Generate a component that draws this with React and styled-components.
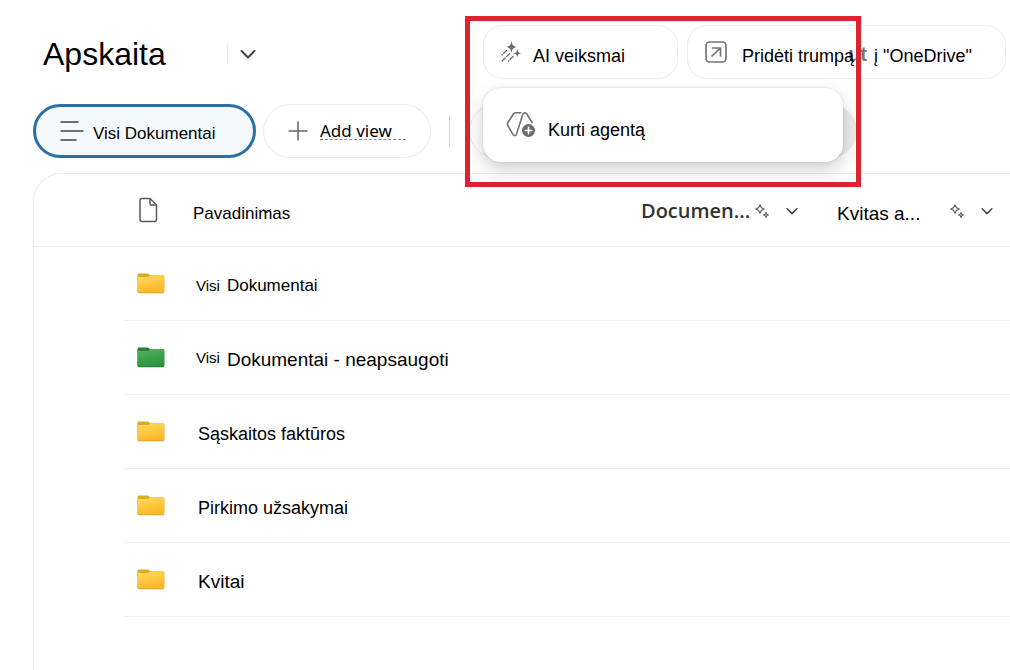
import React from 'react';
import styled, { createGlobalStyle } from 'styled-components';

const GlobalStyle = createGlobalStyle`
  * {
    box-sizing: border-box;
  }

  body {
    margin: 0;
    background: #fff;
    color: #000;
    font-family: 'Liberation Sans', Arial, sans-serif;
    overflow-x: hidden;
  }

  button {
    font-family: inherit;
    color: inherit;
    cursor: pointer;
  }
`;

const Page = styled.div`
  min-height: 100vh;
  padding: 25px 0 0 33px;
  display: flex;
  flex-direction: column;
  overflow: hidden;
`;

const TopBar = styled.header`
  display: grid;
  grid-template-columns: 450px 1fr;
  align-items: center;
`;

const TitleGroup = styled.div`
  display: flex;
  align-items: center;
  padding: 4px 0 0 10px;
`;

const Title = styled.h1`
  margin: 0;
  width: 184px;
  font-size: 32px;
  line-height: 50px;
  font-weight: 400;
`;

const Divider = styled.span`
  width: 1px;
  height: ${({ $height }) => $height}px;
  background: ${({ $color }) => $color};
`;

const IconButton = styled.button`
  display: inline-flex;
  align-items: center;
  justify-content: center;
  padding: 0;
  border: 0;
  background: none;
  color: #444;
`;

const TitleToggle = styled(IconButton)`
  width: 40px;
  height: 40px;
`;

const Actions = styled.div`
  display: flex;
  gap: 9px;
  white-space: nowrap;
`;

const Pill = styled.button`
  display: flex;
  align-items: center;
  gap: ${({ $gap }) => $gap || 12}px;
  height: 54px;
  min-width: ${({ $width }) => $width}px;
  padding: 0 17px;
  border: 1px solid #ebebeb;
  border-radius: ${({ $radius }) => $radius || 27}px;
  background: #fff;
  font-size: 18px;
  text-align: left;
  white-space: nowrap;
`;

const ViewPill = styled(Pill)`
  padding: 0 24px;
`;

const ActiveViewPill = styled(ViewPill)`
  border: 3px solid #2a70a5;
  background: #f3f9fd;
  font-size: 17px;
`;

const Label = styled.span`
  padding-top: ${({ $drop }) => $drop || 8}px;
  line-height: 22px;
`;

const AddLabel = styled.span`
  position: relative;
  font-family: 'Noto Sans', sans-serif;
  font-size: 17px;
  line-height: 22px;

  &::after {
    content: '';
    position: absolute;
    left: 0;
    right: -14px;
    bottom: 2px;
    border-bottom: 1px dashed #888;
  }
`;

const Ghost = styled.span`
  position: relative;
  display: inline-block;
  width: 15px;
  height: 22px;
  vertical-align: bottom;

  &::after {
    content: 'ut';
    position: absolute;
    right: 2px;
    top: -2px;
    color: #777;
    font-size: 20px;
    font-weight: 700;
    z-index: -1;
  }
`;

const ShortcutPill = styled(Pill)`
  position: relative;
  z-index: 0;
`;

const MenuAnchor = styled.div`
  position: relative;
  z-index: 2;
`;

const Menu = styled.div`
  position: absolute;
  top: 63px;
  left: 0;
  width: 360px;
  border-radius: 18px;
  background: #fff;
  box-shadow: 0 8px 18px rgba(0, 0, 0, 0.18), 0 0 3px rgba(0, 0, 0, 0.14);
`;

const MenuItem = styled.button`
  display: flex;
  align-items: center;
  gap: 12px;
  width: 100%;
  height: 74px;
  padding: 0 23px;
  border: 0;
  border-radius: 18px;
  background: none;
  font-size: 18px;
`;

const Highlight = styled.div`
  position: absolute;
  top: -9px;
  left: -18px;
  width: 396px;
  height: 171px;
  border: 5px solid #dc2430;
  pointer-events: none;
`;

const ViewBar = styled.nav`
  display: flex;
  align-items: center;
  gap: 7px;
  margin-top: 25px;
`;

const FilterSlot = styled.div`
  display: flex;
  align-items: center;
  gap: 19px;
  margin-left: 11px;
`;

const FilterBox = styled.div`
  width: 388px;
  height: 54px;
  border: 1px solid #e8e8e8;
  border-radius: 27px;
  background: linear-gradient(90deg, #fff, #ebebeb);
`;

const Panel = styled.main`
  flex: 1;
  margin-top: 15px;
  border: 1px solid #ececec;
  border-width: 1px 0 0 1px;
  border-top-left-radius: 28px;
`;

const FileTable = styled.table`
  width: 100%;
  table-layout: fixed;
  border-collapse: separate;
  border-spacing: 0;
`;

const Th = styled.th`
  height: 73px;
  padding: 0 0 0 ${({ $indent }) => $indent || 0}px;
  border-bottom: 1px solid #ededed;
  font-weight: 400;
  font-size: ${({ $size }) => $size || 17}px;
  text-align: left;
  white-space: nowrap;

  > svg {
    display: block;
  }
`;

const HeadCell = styled.div`
  display: flex;
  align-items: center;
  padding-top: 2px;
`;

const HeadText = styled.span`
  width: ${({ $width }) => $width}px;
  padding-top: 6px;
  line-height: 22px;
`;

const StrongHeadText = styled.span`
  width: 114px;
  font-family: 'Open Sans', sans-serif;
  font-weight: 600;
  line-height: 22px;
  color: #333;
`;

const ColumnToggle = styled(IconButton)`
  width: 24px;
  height: 24px;
  margin-left: 11px;
`;

const SortMark = styled.span`
  position: relative;
  padding-top: 5px;
  line-height: 22px;

  svg {
    position: absolute;
    left: 70px;
    top: 9px;
  }
`;

const Td = styled.td`
  height: 74px;
  padding: 0 0 0 ${({ $indent }) => $indent || 0}px;
  border-bottom: 1px solid ${({ $plain }) => ($plain ? 'transparent' : '#f0f0f0')};
`;

const FolderLink = styled.a`
  display: inline-flex;
  align-items: ${({ $raised }) => ($raised ? 'flex-start' : 'center')};
  gap: 7px;
  padding-top: 4px;
  color: #000;
  font-size: ${({ $size }) => $size}px;
  line-height: 22px;
  text-decoration: none;
  white-space: nowrap;
`;

const Prefix = styled.span`
  font-size: 15px;
  line-height: ${({ $raised }) => ($raised ? 18 : 22)}px;
`;

const ChevronDown = ({ width = 16, stroke = 2 }) => (
  <svg width={width} height={width} viewBox="0 0 16 16" fill="none" stroke="currentColor" strokeWidth={stroke} strokeLinecap="round" strokeLinejoin="round">
    <path d="M1.5 5 8 11.5 14.5 5" />
  </svg>
);

const AiIcon = () => (
  <svg width="20" height="22" viewBox="0 0 20 22" fill="#6b6b6b">
    <path d="M10.500 0c.8 4.200 1.600 5.100 5.500 6-3.900.9-4.700 1.800-5.500 6-.8-4.200-1.600-5.100-5.500-6 3.900-.9 4.700-1.800 5.500-6z" />
    <path d="M16.300 8.200c.6 2.800 1.200 3.400 3.700 4-2.500.6-3.100 1.200-3.700 4-.6-2.800-1.200-3.400-3.700-4 2.500-.6 3.100-1.200 3.700-4z" />
    <path d="M5.500 9.500 1 14M8.500 12.800 1.200 20M12 15.500 7.500 20" fill="none" stroke="#6b6b6b" strokeWidth="1.300" strokeLinecap="round" strokeDasharray="4 2" />
  </svg>
);

const ShortcutIcon = () => (
  <svg width="22" height="22" viewBox="0 0 22 22" fill="none" stroke="#757575" strokeWidth="1.700" strokeLinecap="round" strokeLinejoin="round">
    <rect x="1" y="1" width="20" height="20" rx="3.500" />
    <path d="M7.500 7h8v8M15.500 7l-8.500 8" />
  </svg>
);

const AgentIcon = () => (
  <svg width="30" height="28" viewBox="0 0 30 28" fill="none" stroke="#737373" strokeWidth="1.600" strokeLinecap="round" strokeLinejoin="round">
    <path d="M14 1.800H9.300c-.9 0-1.600.4-2 1.200L1.500 12.200c-.3.600-.3 1.200 0 1.800l5.600 9.600c.8 1.300 2.900 1.100 3.400-.4L16.700 3.600c.6-2 3.100-2.400 4.200-.6l5.100 8.500" />
    <path d="M14 1.800h.8" />
    <circle cx="22.500" cy="19.500" r="6.500" fill="#6b6b6b" stroke="none" />
    <path d="M22.500 16.200v6.600M19.200 19.500h6.600" stroke="#fff" />
  </svg>
);

const ViewIcon = () => (
  <svg width="24" height="20" viewBox="0 0 24 20" fill="none" stroke="#3c4246" strokeWidth="1.500" strokeLinecap="round">
    <path d="M1 1h17M1 10h22M1 19h15" />
  </svg>
);

const PlusIcon = () => (
  <svg width="20" height="20" viewBox="0 0 20 20" fill="none" stroke="#666" strokeWidth="1.500" strokeLinecap="round">
    <path d="M10 1v18M1 10h18" />
  </svg>
);

const FileIcon = () => (
  <svg width="20" height="26" viewBox="0 0 20 26" fill="none" stroke="#5a5a5a" strokeWidth="1.500" strokeLinejoin="round">
    <path d="M4 1.500h8l6.500 6.500v14.500c0 1.200-.8 2-2 2H4c-1.200 0-2-.8-2-2V3.500c0-1.200.8-2 2-2z" />
    <path d="M12 1.500V6.500c0 1 .6 1.500 1.500 1.500h5" />
  </svg>
);

const SparkleIcon = () => (
  <svg width="14" height="14" viewBox="0 0 14 14" fill="none" stroke="#666" strokeWidth="1.200" strokeLinejoin="round">
    <path d="M5 .8 6.400 3.600 9.300 5 6.400 6.400 5 9.300 3.600 6.400.8 5 3.600 3.600z" />
    <path d="M11 8.600 11.700 10.300 13.400 11 11.700 11.700 11 13.400 10.300 11.700 8.600 11 10.300 10.300z" />
  </svg>
);

const folderColors = {
  yellow: { tab: '#dcab22', top: '#ffdc61', bottom: '#fbb829', edge: '#d69a20' },
  green: { tab: '#2b7d38', top: '#55b45b', bottom: '#2c9440', edge: '#247a34' },
};

const FolderIcon = ({ color, id }) => {
  const { tab, top, bottom, edge } = folderColors[color];
  return (
    <svg width="28" height="21" viewBox="0 0 28 21" display="block">
      <defs>
        <linearGradient id={id} x1="0" y1="0" x2="0.3" y2="1">
          <stop offset="0" stopColor={top} />
          <stop offset="1" stopColor={bottom} />
        </linearGradient>
      </defs>
      <path d="M2 .5h8.500c.6 0 1 .2 1.400.6L14 3v4H.5V2C.5 1.100 1.100.5 2 .5z" fill={tab} />
      <path d="M.5 4h10c.6 0 1-.2 1.400-.6l.6-.6c.4-.4.8-.6 1.500-.6h11.800c.9 0 1.500.6 1.500 1.500v15.100c0 .9-.6 1.500-1.500 1.500H2c-.9 0-1.500-.6-1.500-1.500z" fill={edge} />
      <path d="M.5 4h10c.6 0 1-.2 1.400-.6l.6-.6c.4-.4.8-.6 1.500-.6h11.800c.9 0 1.500.6 1.500 1.500v14.300c0 .9-.6 1.500-1.500 1.500H2c-.9 0-1.500-.6-1.500-1.500z" fill={`url(#${id})`} />
    </svg>
  );
};

const folders = [
  { id: 'visi', prefix: 'Visi', name: 'Dokumentai', color: 'yellow', size: 17 },
  { id: 'neapsaugoti', prefix: 'Visi', name: 'Dokumentai - neapsaugoti', color: 'green', size: 19, raised: true },
  { id: 'saskaitos', name: 'Sąskaitos faktūros', color: 'yellow', size: 18 },
  { id: 'pirkimo', name: 'Pirkimo užsakymai', color: 'yellow', size: 18 },
  { id: 'kvitai', name: 'Kvitai', color: 'yellow', size: 19 },
];

const App = () => {
  return (
    <Page>
      <GlobalStyle />
      <TopBar>
        <TitleGroup>
          <Title>Apskaita</Title>
          <Divider $height={20} $color="#dfe9f1" />
          <TitleToggle type="button" aria-label="Apskaita">
            <ChevronDown />
          </TitleToggle>
        </TitleGroup>
        <Actions>
          <MenuAnchor>
            <Pill type="button" $width={195} $radius={20} aria-haspopup="menu" aria-expanded="true">
              <AiIcon />
              <Label>AI veiksmai</Label>
            </Pill>
            <Menu role="menu">
              <MenuItem type="button" role="menuitem">
                <AgentIcon />
                <Label $drop={10}>Kurti agentą</Label>
              </MenuItem>
            </Menu>
            <Highlight />
          </MenuAnchor>
          <ShortcutPill type="button" $width={319} $radius={20} $gap={15}>
            <ShortcutIcon />
            <Label>
              Pridėti trumpą<Ghost /> į "OneDrive"
            </Label>
          </ShortcutPill>
        </Actions>
      </TopBar>

      <ViewBar>
        <ActiveViewPill type="button" $width={223} $gap={9} aria-pressed="true">
          <ViewIcon />
          <Label $drop={6}>Visi Dokumentai</Label>
        </ActiveViewPill>
        <ViewPill type="button" $width={168}>
          <PlusIcon />
          <AddLabel>Add view</AddLabel>
        </ViewPill>
        <FilterSlot>
          <Divider $height={30} $color="#cfcfcf" />
          <FilterBox />
        </FilterSlot>
      </ViewBar>

      <Panel>
        <FileTable>
          <colgroup>
            <col style={{ width: 90 }} />
            <col style={{ width: 69 }} />
            <col />
            <col style={{ width: 196 }} />
            <col style={{ width: 173 }} />
          </colgroup>
          <thead>
            <tr>
              <Th />
              <Th $indent={14}>
                <FileIcon />
              </Th>
              <Th>
                <HeadCell>
                  <SortMark>
                    Pavadinimas
                    <ChevronDown width={8} />
                  </SortMark>
                </HeadCell>
              </Th>
              <Th $size={20}>
                <HeadCell>
                  <StrongHeadText>Documen...</StrongHeadText>
                  <SparkleIcon />
                  <ColumnToggle type="button" aria-label="Documen...">
                    <ChevronDown width={12} />
                  </ColumnToggle>
                </HeadCell>
              </Th>
              <Th $size={19}>
                <HeadCell>
                  <HeadText $width={113}>Kvitas a...</HeadText>
                  <SparkleIcon />
                  <ColumnToggle type="button" aria-label="Kvitas a...">
                    <ChevronDown width={12} />
                  </ColumnToggle>
                </HeadCell>
              </Th>
            </tr>
          </thead>
          <tbody>
            {folders.map(({ id, prefix, name, color, size, raised }) => (
              <tr key={id}>
                <Td $plain />
                <Td $indent={13}>
                  <FolderIcon color={color} id={`folder-${id}`} />
                </Td>
                <Td $indent={prefix ? 3 : 5} colSpan={3}>
                  <FolderLink href={`#${id}`} $size={size} $raised={raised}>
                    {prefix && <Prefix $raised={raised}>{prefix}</Prefix>}
                    <span>{name}</span>
                  </FolderLink>
                </Td>
              </tr>
            ))}
          </tbody>
        </FileTable>
      </Panel>
    </Page>
  );
};

export default App;
